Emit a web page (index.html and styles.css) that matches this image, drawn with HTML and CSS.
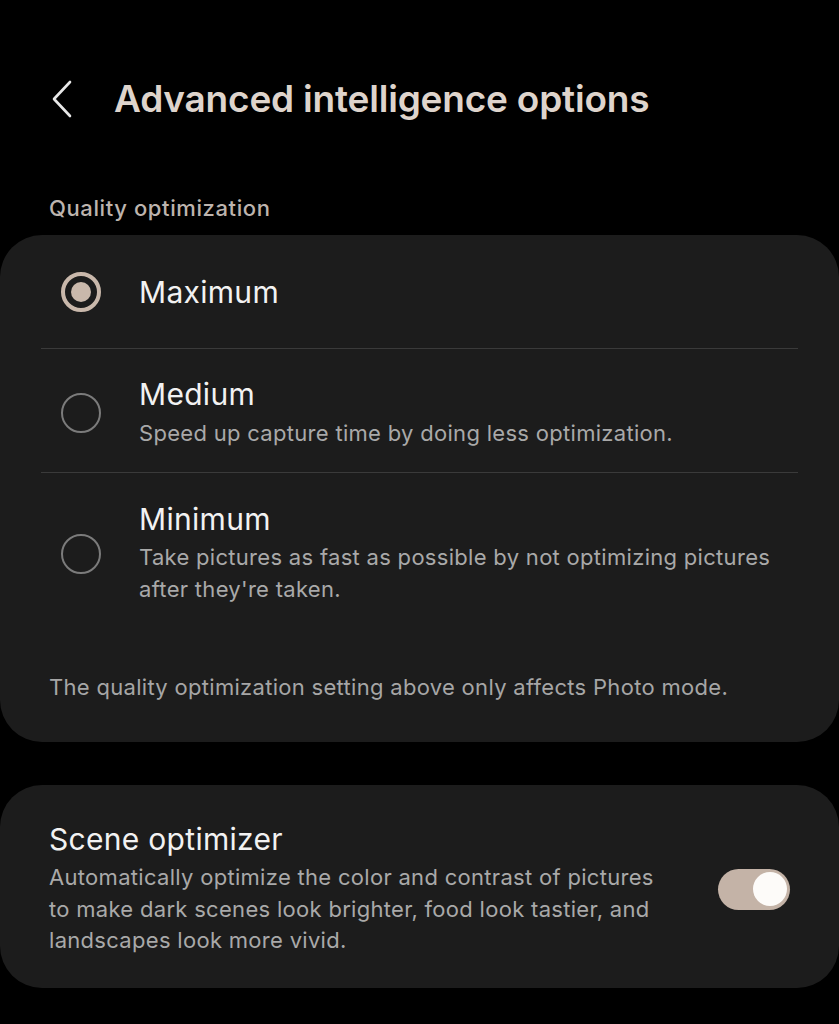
FILE: index.html
```html
<!DOCTYPE html>
<html>
<head>
<meta charset="utf-8">
<link rel="stylesheet" href="styles.css">
</head>
<body>
<div class="header">
  <svg class="back" width="24" height="38" viewBox="0 0 24 38"><path d="M20 2 L4 19 L20 36" fill="none" stroke="#e8e8e8" stroke-width="2.6" stroke-linecap="round" stroke-linejoin="round"/></svg>
  <h1 class="title">Advanced intelligence options</h1>
</div>
<div class="section-label">Quality optimization</div>
<div class="card card-options">
  <div class="row row-max">
    <span class="radio radio-on"></span>
    <div class="text">
      <div class="row-title">Maximum</div>
    </div>
  </div>
  <div class="divider"></div>
  <div class="row row-med">
    <span class="radio"></span>
    <div class="text">
      <div class="row-title">Medium</div>
      <div class="row-sub">Speed up capture time by doing less optimization.</div>
    </div>
  </div>
  <div class="divider"></div>
  <div class="row row-min">
    <span class="radio"></span>
    <div class="text">
      <div class="row-title">Minimum</div>
      <div class="row-sub">Take pictures as fast as possible by not optimizing pictures after they're taken.</div>
    </div>
  </div>
  <div class="footnote">The quality optimization setting above only affects Photo mode.</div>
</div>
<div class="card card-scene">
  <div class="scene-text">
    <div class="row-title">Scene optimizer</div>
    <div class="row-sub scene-sub">Automatically optimize the color and contrast of pictures to make dark scenes look brighter, food look tastier, and landscapes look more vivid.</div>
  </div>
  <div class="toggle"><span class="knob"></span></div>
</div>
</body>
</html>
```
FILE: styles.css
```css
* { box-sizing: border-box; }
body {
  margin: 0;
  background: #000;
  font-family: "Inter", "Roboto", sans-serif;
  width: 839px;
  height: 1024px;
  overflow: hidden;
}
.header {
  display: flex;
  align-items: center;
  padding: 76px 0 0 50px;
  height: 122px;
}
.back { display: block; margin-right: 40px; }
.title {
  margin: 0;
  font-size: 37px;
  line-height: 46px;
  font-weight: 600;
  color: #ded4cc;
  letter-spacing: -0.2px;
}
.section-label {
  padding: 72px 0 0 49px;
  line-height: 28px;
  font-size: 22px;
  font-weight: 500;
  letter-spacing: 0.6px;
  color: #bdb4ae;
  margin-bottom: 13px;
}
.card {
  background: #1c1c1c;
  border-radius: 42px;
}
.card-options { padding: 0 41px 39px; }
.row {
  display: flex;
  align-items: center;
}
.row-max { height: 113px; }
.row-med { padding: 28px 0 23px; }
.row-min { padding: 29px 0 0; }
.radio {
  flex: none;
  width: 40px;
  height: 40px;
  border-radius: 50%;
  border: 2.5px solid #7b7b7b;
  margin: 0 38px 0 20px;
  position: relative;
}
.radio-on {
  border: 4px solid #c9b8ab;
}
.radio-on::after {
  content: "";
  position: absolute;
  left: 6px; top: 6px;
  width: 20px; height: 20px;
  border-radius: 50%;
  background: #c9b8ab;
}
.row-title {
  font-size: 30px;
  line-height: 34px;
  letter-spacing: 0.3px;
  color: #f2f2f2;
}
.row-sub {
  margin-top: 6px;
  font-size: 22px;
  line-height: 32px;
  letter-spacing: 0.3px;
  color: #a9a9a9;
}
.row-min .row-sub { margin-top: 5px; width: 640px; }
.divider {
  height: 1px;
  background: #3a3a3a;
}
.footnote {
  margin: 66px 0 0 8px;
  font-size: 22px;
  line-height: 32px;
  letter-spacing: 0.3px;
  color: #a6a6a6;
}
.card-scene {
  margin-top: 43px;
  padding: 37px 49px 31px 49px;
  display: flex;
  align-items: center;
  justify-content: space-between;
}
.scene-text { width: 630px; }
.scene-sub { line-height: 31.5px; }
.toggle {
  flex: none;
  width: 72px;
  height: 41px;
  border-radius: 21px;
  background: #c4b3a7;
  position: relative;
}
.knob {
  position: absolute;
  right: 3px;
  top: 3.5px;
  width: 34px;
  height: 34px;
  border-radius: 50%;
  background: #fdfbf9;
}
```
